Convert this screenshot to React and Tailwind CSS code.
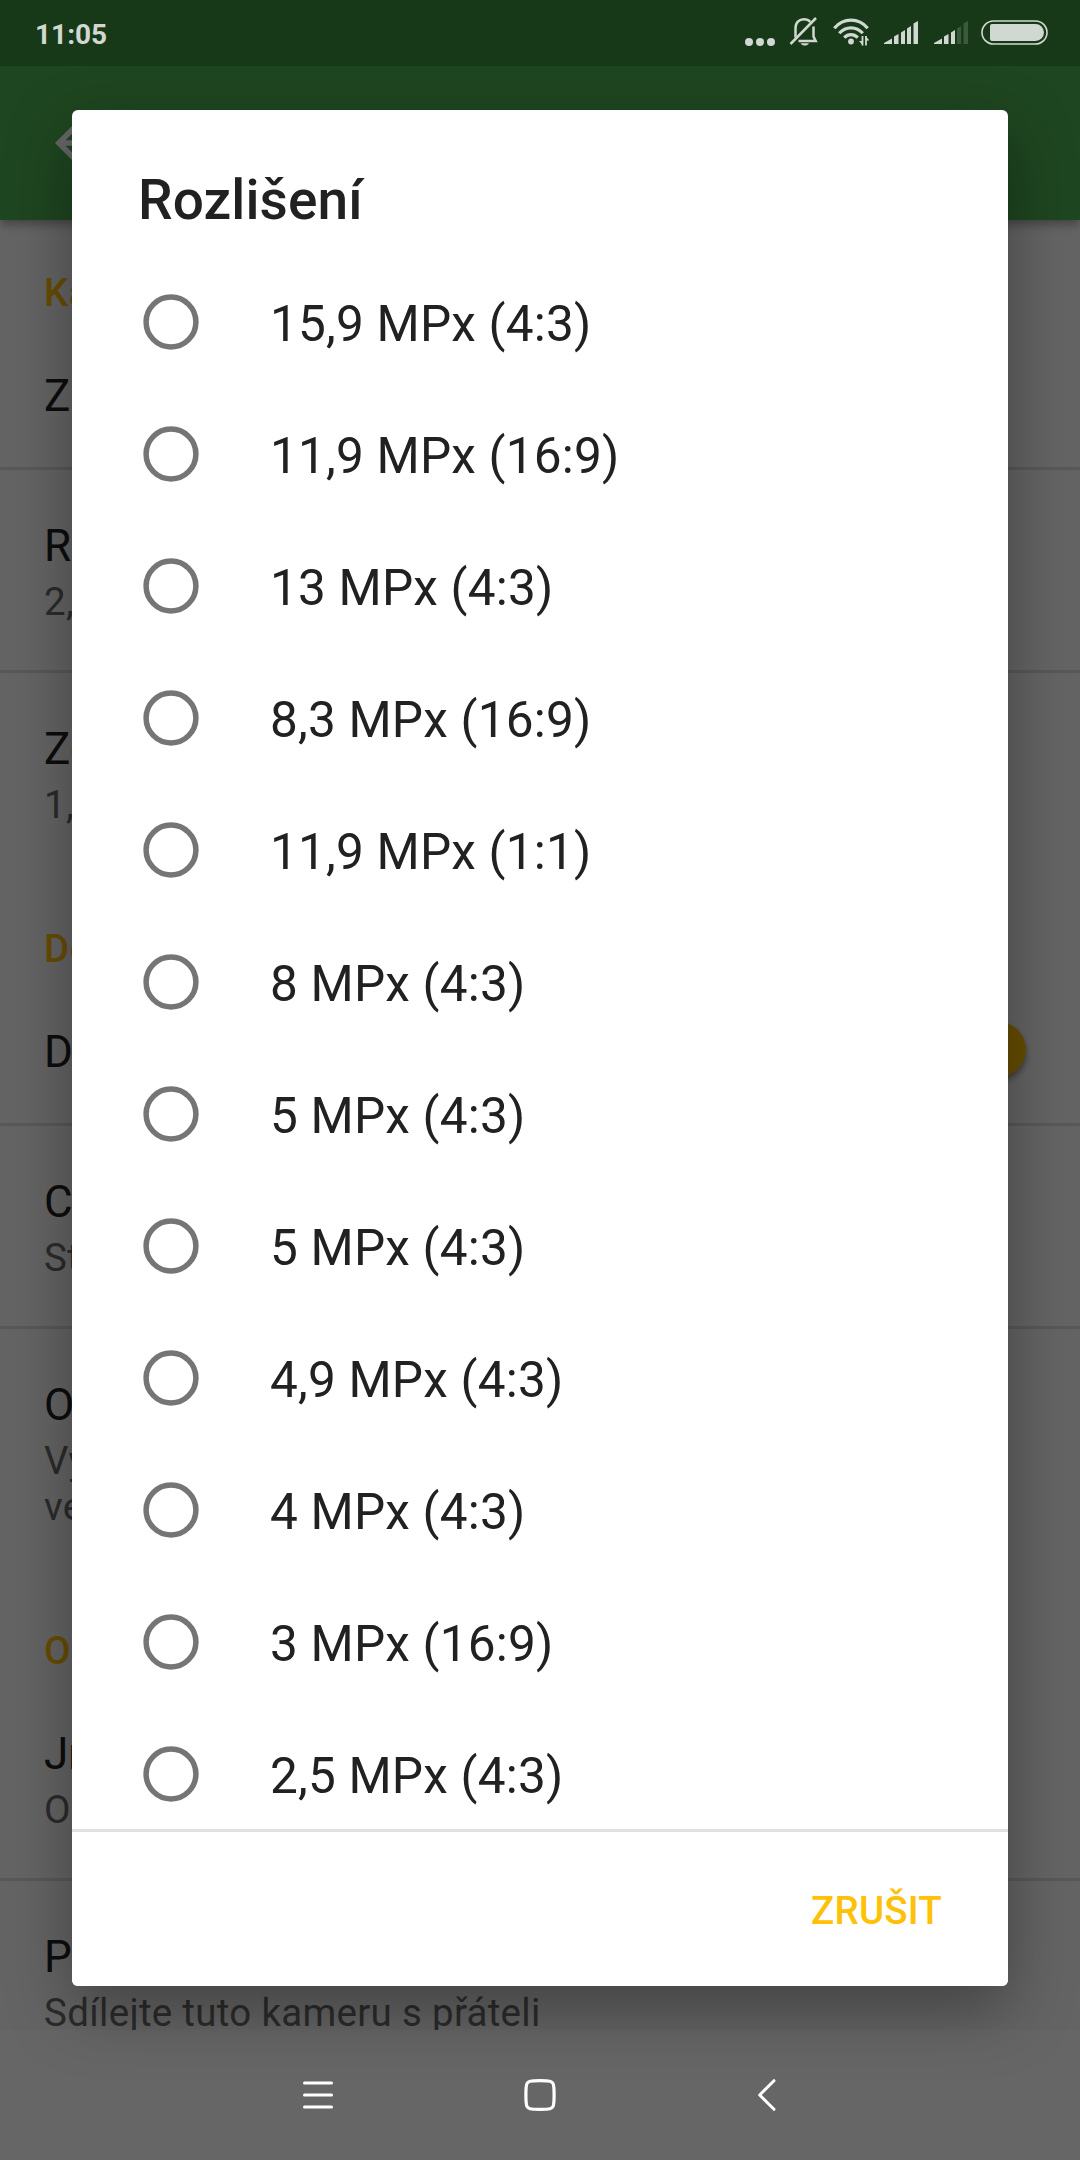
import clsx from 'clsx';

const RESOLUTIONS = [
  '15,9 MPx (4:3)',
  '11,9 MPx (16:9)',
  '13 MPx (4:3)',
  '8,3 MPx (16:9)',
  '11,9 MPx (1:1)',
  '8 MPx (4:3)',
  '5 MPx (4:3)',
  '5 MPx (4:3)',
  '4,9 MPx (4:3)',
  '4 MPx (4:3)',
  '3 MPx (16:9)',
  '2,5 MPx (4:3)',
];

const SIGNAL_BARS = [
  '0,23 0,22 8,17.5 8,23',
  '10,23 10,15.5 14.5,13 14.5,23',
  '17,23 17,11.5 21,9 21,23',
  '23,23 23,7.5 27,5 27,23',
  '29.5,23 29.5,2.5 34,0 34,23',
];

function BellOffIcon() {
  return (
    <svg width="30" height="30" viewBox="0 0 30 30" fill="none" stroke="currentColor" strokeWidth="2.5">
      <path d="M6.500 20.500V11.500C6.500 5.500 10 2.300 15 2.300c2.800 0 4.700.8 6.300 2.600" />
      <path d="M24.500 9.500V19.500l2.200 4.600H9.500" />
      <path d="M1.500 27L27 1" />
      <path d="M11.500 26.200h8.500c-1 1.800-2.500 2.300-4.200 2.300s-3.300-.5-4.300-2.300z" fill="currentColor" stroke="none" />
    </svg>
  );
}

function WifiIcon() {
  return (
    <svg width="36" height="28" viewBox="0 0 36 28" fill="none" stroke="currentColor" strokeWidth="3.2">
      <path d="M1.300 10.200C10.500-.5 25.500-.5 34.700 10.200" />
      <path d="M6.200 15.300c6.500-7.300 17.100-7.300 23.600 0" />
      <path d="M11.200 19.700c4-4 9.600-4 13.600 0" />
      <circle cx="18" cy="23.500" r="2.900" fill="currentColor" stroke="none" />
      <path d="M29.500 27.500V18M33 18v9.500" strokeWidth="1.800" />
      <path d="M30 27.500l-4-4.500h4zM32.500 18l4 4.500h-4z" fill="currentColor" stroke="none" />
    </svg>
  );
}

function SignalIcon({ level }) {
  return (
    <svg width="34" height="23" viewBox="0 0 34 23" fill="currentColor">
      {SIGNAL_BARS.map((points, i) => (
        <polygon key={i} points={points} opacity={i < level ? 1 : 0.2} />
      ))}
    </svg>
  );
}

function StatusBar() {
  return (
    <div className="flex h-[66px] items-start justify-between bg-[#173918] pr-8 pl-[35px] text-[#d1d8d1]">
      <span className="mt-[21px] text-[28px] leading-7 font-bold">11:05</span>
      <div className="flex items-start">
        <div className="mt-[38px] mr-[14px] flex gap-[3px]">
          <span className="size-2 rounded-full bg-current" />
          <span className="size-2 rounded-full bg-current" />
          <span className="size-2 rounded-full bg-current" />
        </div>
        <div className="mt-[17px] mr-[14px]"><BellOffIcon /></div>
        <div className="mt-[18px] mr-[15px]"><WifiIcon /></div>
        <div className="mt-[21px] mr-4"><SignalIcon level={5} /></div>
        <div className="mt-[21px] mr-[13px]"><SignalIcon level={3} /></div>
        <svg className="mt-5" width="67" height="25" viewBox="0 0 67 25" fill="currentColor">
          <rect x="1" y="1" width="65" height="23" rx="11.500" fill="none" stroke="currentColor" strokeWidth="1.600" />
          <path d="M11 4H54.500a8.500 8.500 0 0 1 0 17H11a2 2 0 0 1-2-2V6a2 2 0 0 1 2-2z" />
        </svg>
      </div>
    </div>
  );
}

function SectionHeader({ first, children }) {
  return (
    <div className={clsx('flex items-end px-11 pb-[9px]', first ? 'h-[105px]' : 'h-[108px]')}>
      <h2 className="text-[38.5px] leading-[46px] font-medium tracking-[0.5px] text-[#ffc107]">{children}</h2>
    </div>
  );
}

function Setting({ title, lines = [], divider, afterHeader }) {
  return (
    <div className={clsx('px-11 pb-[45px]', afterHeader ? 'pt-[45px]' : 'pt-[50px]', divider && 'border-b-[3px] border-black/12')}>
      <p className="text-[44px] leading-[52px] text-[#212121]">{title}</p>
      <div className="mt-[7px] text-[38.5px] leading-[46px] tracking-[0.3px] text-[#6b6b6b]">
        {lines.map((line) => <p key={line}>{line}</p>)}
      </div>
    </div>
  );
}

function SimpleSetting({ title, toggle }) {
  return (
    <div className="flex h-[145px] items-center justify-between border-b-[3px] border-black/12 pr-[54px] pl-11">
      <p className="text-[44px] leading-[52px] text-[#212121]">{title}</p>
      {toggle && (
        <div className="-mt-1.5 flex h-[38px] w-[93px] items-center justify-end rounded-full bg-[#ffc107]/30">
          <span className="size-[55px] shrink-0 rounded-full bg-[#ffc107] shadow-[0_4px_6px_rgba(0,0,0,0.4)]" />
        </div>
      )}
    </div>
  );
}

function SettingsScreen() {
  return (
    <div className="flex h-[1964px] flex-col overflow-hidden bg-[#fafafa]">
      <div className="relative flex h-[154px] shrink-0 items-center bg-[#4caf50] px-11 shadow-[0_4px_10px_rgba(0,0,0,0.35)]">
        <svg width="66" height="66" viewBox="0 0 24 24" fill="#fff">
          <path d="M20 11H7.830l5.590-5.590L12 4l-8 8 8 8 1.410-1.410L7.830 13H20v-2z" />
        </svg>
      </div>
      <div>
        <SectionHeader first>Kamera</SectionHeader>
        <SimpleSetting title="Záběr" />
        <Setting title="Režim" lines={['2,1 MPx']} divider />
        <Setting title="Zoom" lines={['1,0×']} />
        <SectionHeader>Detekce</SectionHeader>
        <SimpleSetting title="Detekce" toggle />
        <Setting title="Citlivost" lines={['Střední']} divider />
        <Setting title="Oblast" lines={['Vyberte část', 've videu']} />
        <SectionHeader>Obecné</SectionHeader>
        <Setting title="Jméno" lines={['Obývák']} divider afterHeader />
        <Setting title="Pozvat" lines={['Sdílejte tuto kameru s přáteli']} />
      </div>
    </div>
  );
}

function NavBar() {
  return (
    <div className="flex h-[130px] items-start justify-center pt-[49px] text-white">
      <svg className="mr-[190px]" width="32" height="32" viewBox="0 0 32 32" stroke="currentColor" strokeWidth="3" strokeLinecap="round">
        <path d="M2.500 4h27M2.500 16h27M2.500 28h27" />
      </svg>
      <svg width="32" height="32" viewBox="0 0 32 32" fill="none" stroke="currentColor" strokeWidth="3.2">
        <path d="M16 1.700C26.500 1.700 27.500 2.300 28.900 4.300C30.500 7 30.500 25 28.900 27.700C27.500 29.700 26.500 30.300 16 30.300S4.500 29.700 3.100 27.700C1.500 25 1.500 7 3.100 4.300C4.500 2.300 5.500 1.700 16 1.700z" />
      </svg>
      <svg className="ml-[196px]" width="26" height="32" viewBox="0 0 26 32" fill="none" stroke="currentColor" strokeWidth="3" strokeLinecap="round" strokeLinejoin="round">
        <path d="M22 1.700L7.700 16 22 30.300" />
      </svg>
    </div>
  );
}

function ResolutionDialog() {
  return (
    <div className="absolute top-[110px] left-[72px] flex h-[1876px] w-[936px] flex-col rounded-[6px] bg-white text-[#212121] shadow-[0_24px_64px_rgba(0,0,0,0.34)]">
      <h1 className="px-[66px] pt-[58px] pb-6 text-[55px] leading-[64px] font-medium tracking-[0.1px]">Rozlišení</h1>
      <ul>
        {RESOLUTIONS.map((label, i) => (
          <li key={i} className="flex h-[132px] items-center pl-[71px]">
            <svg width="56" height="56" viewBox="0 0 56 56" fill="none">
              <circle cx="28" cy="28" r="24.900" stroke="#757575" strokeWidth="5.500" />
            </svg>
            <span className="mt-1 ml-[71px] text-[49.5px] leading-[58px] tracking-[0.2px]">{label}</span>
          </li>
        ))}
      </ul>
      <div className="relative -mt-[11px] flex grow items-center justify-end rounded-b-[6px] border-t-[3px] border-[#e0e0e0] bg-white pr-[66px]">
        <button className="mt-1 text-[38.5px] leading-[46px] font-medium tracking-[0.2px] text-[#ffc107]">ZRUŠIT</button>
      </div>
    </div>
  );
}

export default function App() {
  return (
    <div className="relative h-[2160px] w-[1080px] overflow-hidden bg-white font-['Roboto',sans-serif]">
      <div className="h-[66px]" />
      <SettingsScreen />
      <div className="absolute inset-0 bg-black/60" />
      <ResolutionDialog />
      <div className="absolute inset-x-0 top-0"><StatusBar /></div>
      <div className="absolute inset-x-0 bottom-0"><NavBar /></div>
    </div>
  );
}
